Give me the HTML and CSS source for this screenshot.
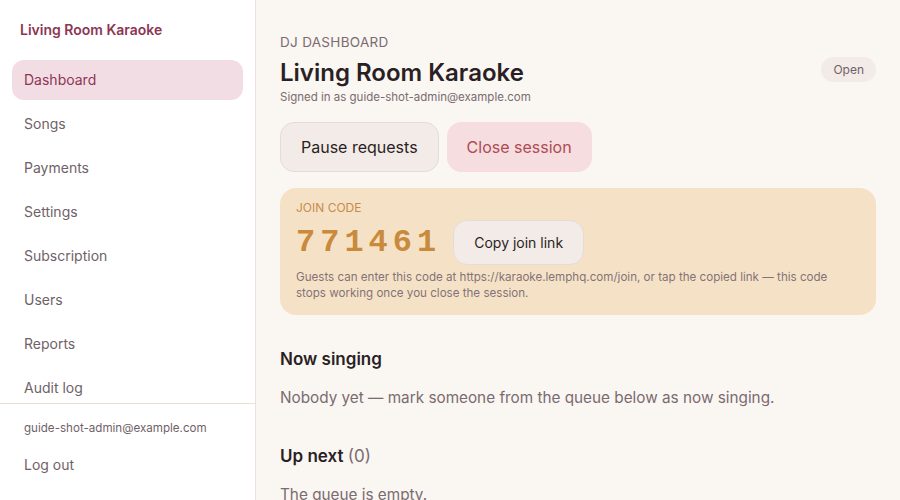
FILE: index.html
```html
<!DOCTYPE html>
<html lang="en">
<head>
    <meta charset="UTF-8">
    <meta name="viewport" content="width=device-width, initial-scale=1.0">
    <title>DJ Dashboard</title>
    <link rel="stylesheet" href="styles.css">
</head>
<body>
    <aside class="sidebar">
        <div class="brand">Living Room Karaoke</div>
        <nav class="nav">
            <a class="nav-item active" href="#">Dashboard</a>
            <a class="nav-item" href="#">Songs</a>
            <a class="nav-item" href="#">Payments</a>
            <a class="nav-item" href="#">Settings</a>
            <a class="nav-item" href="#">Subscription</a>
            <a class="nav-item" href="#">Users</a>
            <a class="nav-item" href="#">Reports</a>
            <a class="nav-item" href="#">Audit log</a>
        </nav>
        <div class="account">
            <div class="account-email">guide-shot-admin@example.com</div>
            <a class="logout" href="#">Log out</a>
        </div>
    </aside>

    <main class="main">
        <header class="page-head">
            <div>
                <div class="eyebrow">DJ Dashboard</div>
                <h1>Living Room Karaoke</h1>
                <div class="signed-in">Signed in as guide-shot-admin@example.com</div>
            </div>
            <span class="badge">Open</span>
        </header>

        <div class="actions">
            <button class="btn">Pause requests</button>
            <button class="btn btn-danger">Close session</button>
        </div>

        <section class="join-card">
            <div class="join-label">Join code</div>
            <div class="join-row">
                <span class="join-code">771461</span>
                <button class="btn btn-small">Copy join link</button>
            </div>
            <p class="join-help">Guests can enter this code at https://karaoke.lemphq.com/join, or tap the copied link — this code stops working once you close the session.</p>
        </section>

        <section class="block">
            <h2>Now singing</h2>
            <p class="muted">Nobody yet — mark someone from the queue below as now singing.</p>
        </section>

        <section class="block">
            <h2>Up next <span class="count">(0)</span></h2>
            <p class="muted">The queue is empty.</p>
        </section>
    </main>
</body>
</html>
```

FILE: styles.css
```css
* {
    box-sizing: border-box;
}

body {
    margin: 0;
    font-family: Inter, 'Noto Sans', sans-serif;
    background-color: #faf6f2;
    color: #2a1f24;
    display: flex;
    height: 500px;
    overflow: hidden;
}

.sidebar {
    width: 256px;
    flex-shrink: 0;
    background-color: #fff;
    border-right: 1px solid #ebe2dc;
    display: flex;
    flex-direction: column;
    height: 100vh;
}

.brand {
    padding: 21px 20px 0;
    font-size: 14px;
    font-weight: 600;
    color: #8c3654;
    height: 60px;
}

/* the list is taller than the space above the footer, so it clips */
.nav {
    display: flex;
    flex-direction: column;
    gap: 4px;
    padding: 0 12px;
    height: 343px;
    overflow: hidden;
}

.nav-item {
    display: block;
    flex-shrink: 0;
    height: 40px;
    line-height: 40px;
    padding: 0 12px;
    border-radius: 12px;
    font-size: 14px;
    color: #6f6267;
    text-decoration: none;
}

.nav-item.active {
    background-color: #f3dde4;
    color: #8c3654;
}

.account {
    border-top: 1px solid #e8dfd9;
    padding: 17px 24px 0;
}

.account-email {
    font-size: 11.6px;
    color: #6f6267;
}

.logout {
    display: block;
    margin-top: 21px;
    font-size: 14px;
    color: #6f6267;
    text-decoration: none;
}

.main {
    flex: 1;
    padding: 34px 24px 0;
}

.page-head {
    display: flex;
    justify-content: space-between;
    align-items: flex-start;
}

.eyebrow {
    font-size: 13.5px;
    text-transform: uppercase;
    letter-spacing: 0.3px;
    color: #7a6b70;
}

h1 {
    margin: 8px 0 0;
    font-size: 24px;
    font-weight: 600;
    line-height: 30px;
    color: #2a1f24;
}

.signed-in {
    margin-top: 2px;
    font-size: 11.5px;
    color: #7a6b70;
}

.badge {
    margin-top: 23px;
    padding: 5px 12px;
    border-radius: 999px;
    background-color: #f3ebe8;
    font-size: 12px;
    color: #6f6267;
}

.actions {
    display: flex;
    gap: 8px;
    margin-top: 18px;
}

.btn {
    font-family: inherit;
    font-size: 16px;
    height: 50px;
    padding: 0 20px;
    border-radius: 14px;
    border: 1px solid #e6dcd7;
    background-color: #f3ebe7;
    color: #2a1f24;
}

.btn-danger {
    padding: 0 19px;
    border-color: #f5dde0;
    background-color: #f5dde0;
    color: #b04a55;
}

.btn-small {
    font-size: 14px;
    height: 45px;
}

.join-card {
    margin-top: 16px;
    background-color: #f5e2c6;
    border-radius: 16px;
    padding: 12px 16px 14px;
}

.join-label {
    font-size: 12px;
    text-transform: uppercase;
    color: #c88a4a;
}

.join-row {
    display: flex;
    align-items: center;
    gap: 12px;
    margin-top: 5px;
}

.join-code {
    font-family: 'Liberation Mono', monospace;
    font-weight: 700;
    font-size: 32px;
    letter-spacing: 5px;
    color: #c98a3c;
}

.join-help {
    margin: 4px 0 0;
    font-size: 11.6px;
    line-height: 16px;
    color: #857278;
}

.block {
    margin-top: 34px;
}

.block + .block {
    margin-top: 39px;
}

h2 {
    margin: 0;
    font-size: 17px;
    font-weight: 600;
    color: #2a1f24;
}

.count {
    font-weight: 400;
    color: #7a6b70;
}

.muted {
    margin: 19px 0 0;
    font-size: 15.3px;
    color: #7a6b70;
}
```
